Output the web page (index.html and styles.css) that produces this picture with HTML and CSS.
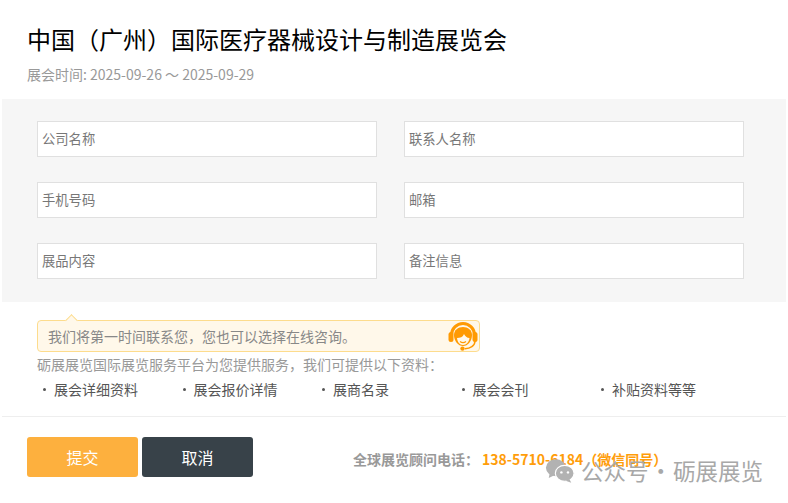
FILE: index.html
```html
<!DOCTYPE html>
<html lang="zh-CN">
<head>
  <meta charset="UTF-8" />
  <title>展会资料</title>
  <link rel="stylesheet" href="styles.css">
</head>
<body>
  <div class="dialog">
    <div class="head">
      <h1>中国（广州）国际医疗器械设计与制造展览会</h1>
      <p class="date">展会时间: 2025-09-26 ～ 2025-09-29</p>
    </div>

    <div class="form-panel">
      <input class="field" type="text" placeholder="公司名称" />
      <input class="field" type="text" placeholder="联系人名称" />
      <input class="field" type="text" placeholder="手机号码" />
      <input class="field" type="text" placeholder="邮箱" />
      <input class="field" type="text" placeholder="展品内容" />
      <input class="field" type="text" placeholder="备注信息" />
    </div>

    <div class="info">
      <div class="notice">
        <span>我们将第一时间联系您，您也可以选择在线咨询。</span>
        <svg class="agent" viewBox="0 0 30 30" width="30" height="30">
          <path d="M3.500 14a11.500 11.500 0 0 1 23 0" fill="none" stroke="#ff9a02" stroke-width="3"/>
          <rect x="0.500" y="11" width="5" height="10" rx="2.500" fill="#ff9a02"/>
          <rect x="24.500" y="11" width="5" height="10" rx="2.500" fill="#ff9a02"/>
          <path d="M6 14c0-5 4-8 9-8s9 3 9 8c0 6-4 11-9 11s-9-5-9-11z" fill="#ff9a02"/>
          <path d="M9 17c3 0 6-1 7-4 1 2 3 4 5.500 4-.5 4-3 7-6.500 7s-5.500-3-6-7z" fill="#fff8ea"/>
          <path d="M12 20.500c2 1.500 4 1.500 6 0" fill="none" stroke="#ff9a02" stroke-width="1.100"/>
          <path d="M27 20c0 5-5 7.500-10 7.800" fill="none" stroke="#ff9a02" stroke-width="1.500"/>
          <circle cx="14.500" cy="27.600" r="2.200" fill="#ff9a02"/>
        </svg>
      </div>
      <p class="intro">砺展展览国际展览服务平台为您提供服务，我们可提供以下资料：</p>
      <ul class="items">
        <li>展会详细资料</li>
        <li>展会报价详情</li>
        <li>展商名录</li>
        <li>展会会刊</li>
        <li>补贴资料等等</li>
      </ul>
    </div>

    <div class="foot">
      <button class="btn btn-submit">提交</button>
      <button class="btn btn-cancel">取消</button>
      <p class="phone">全球展览顾问电话：<span>138-5710-6184（微信同号）</span></p>
    </div>
  </div>

  <div class="watermark">
    <svg viewBox="0 0 32 26" width="30" height="25">
      <ellipse cx="11.500" cy="10" rx="10.500" ry="9" fill="#b2b2b2"/>
      <path d="M5 16l-1 5 6-3z" fill="#b2b2b2"/>
      <ellipse cx="21" cy="16" rx="10" ry="8.500" fill="#b2b2b2" stroke="#fff" stroke-width="1.200"/>
      <path d="M26 22l2 4-6-2z" fill="#b2b2b2"/>
      <circle cx="17.500" cy="15" r="1.300" fill="#fff"/>
      <circle cx="24.500" cy="15" r="1.300" fill="#fff"/>
    </svg>
    <span>公众号 · 砺展展览</span>
  </div>
</body>
</html>
```

FILE: styles.css
```css
* {
  box-sizing: border-box;
}
body {
  margin: 0;
  height: 503px;
  position: relative;
  overflow: hidden;
  background: #fff;
  font-family: "Noto Sans CJK SC", "Noto Sans", sans-serif;
}
.dialog {
  margin: 0 2px;
}
.head {
  padding: 21px 25px 0;
  height: 99px;
}
h1 {
  margin: 0;
  font-size: 24px;
  font-weight: 400;
  line-height: 36px;
  color: #000;
}
.date {
  margin: 6px 0 0;
  font-size: 14px;
  line-height: 22px;
  color: #999;
}
.form-panel {
  display: grid;
  grid-template-columns: 340px 340px;
  grid-auto-rows: 36px;
  column-gap: 27px;
  row-gap: 25px;
  height: 203px;
  padding: 22px 35px;
  background: #f6f6f6;
}
.field {
  width: 100%;
  height: 36px;
  padding: 0 4px 2px;
  border: 1px solid #e0e0e0;
  background: #fff;
  outline: none;
  font-family: inherit;
  font-size: 13.300px;
}
.field::placeholder {
  color: #777;
  opacity: 1;
}
.info {
  height: 115px;
  padding: 18px 35px 0;
  border-bottom: 1px solid #eee;
}
.notice {
  position: relative;
  display: flex;
  align-items: center;
  justify-content: space-between;
  width: 443px;
  height: 32px;
  padding: 0 1px 0 10px;
  background: #fff8ea;
  border: 1px solid #fddc8d;
  border-radius: 4px;
  font-size: 14px;
  color: #888;
}
.notice::before {
  content: '';
  position: absolute;
  top: -5px;
  left: 29px;
  width: 8px;
  height: 8px;
  background: #fff8ea;
  border-top: 1px solid #fddc8d;
  border-left: 1px solid #fddc8d;
  transform: rotate(45deg);
}
.agent {
  flex: none;
}
.intro {
  margin: 1px 0 0;
  font-size: 14px;
  line-height: 22px;
  color: #999;
}
.items {
  display: flex;
  margin: 4px 0 0;
  padding: 0;
  list-style: none;
  font-size: 14px;
  line-height: 20px;
  color: #555;
}
.items li {
  width: 139.500px;
  padding-left: 17px;
  position: relative;
}
.items li::before {
  content: '';
  position: absolute;
  left: 6px;
  top: 9px;
  width: 3px;
  height: 3px;
  border-radius: 50%;
  background: #555;
}
.foot {
  display: flex;
  align-items: center;
  padding: 20px 25px 0;
}
.btn {
  width: 111px;
  height: 40px;
  margin-right: 4px;
  border: none;
  border-radius: 3px;
  font-family: inherit;
  font-size: 16px;
  color: #fff;
}
.btn-submit {
  background: #fdb03e;
}
.btn-cancel {
  background: #384249;
}
.phone {
  margin: 3px 0 0 96px;
  font-size: 14px;
  font-weight: 700;
  color: #999;
}
.phone span {
  margin-left: 3px;
  color: #ff9d0a;
}
.watermark {
  position: absolute;
  left: 545px;
  top: 455px;
  display: flex;
  align-items: center;
  gap: 6px;
  font-size: 22.500px;
  word-spacing: -4px;
  line-height: 30px;
  color: #a8a8a8;
}
```
